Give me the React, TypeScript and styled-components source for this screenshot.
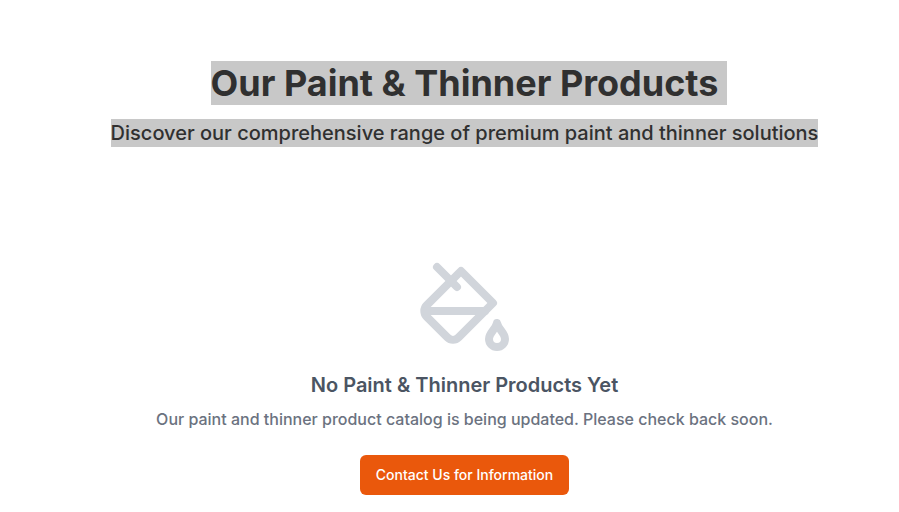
import React from "react";
import styled, { createGlobalStyle } from "styled-components";

const Global = createGlobalStyle`
  * { box-sizing: border-box; }
  body { margin: 0; background: #fff; font-family: Inter, sans-serif; overflow: hidden; }
  h1, h2, p { margin: 0; }
`;
const Page = styled.main`
  width: 929px;
  height: 512px;
  display: flex;
  flex-direction: column;
  align-items: center;
  white-space: nowrap;
`;
const Selected = styled.span`
  display: inline-block;
  background: #c8c8c8;
  color: #303030;
`;
const Title = styled.h1`
  margin-top: 61px;
  padding-left: 9px;
  height: 44px;
  font-size: 36px;
  line-height: 44px;
  font-weight: 700;
  ${Selected} { padding-right: 9px; }
`;
const Subtitle = styled.p`
  margin-top: 14px;
  height: 28px;
  font-size: 20px;
  line-height: 28px;
  font-weight: 450;
`;
const Bucket = styled.svg`
  display: block;
  flex: none;
  margin-top: 112px;
  width: 96px;
  height: 96px;
  fill: none;
  stroke: #d1d5db;
  stroke-width: 2;
  stroke-linecap: round;
  stroke-linejoin: round;
`;
const EmptyTitle = styled.h2`
  margin-top: 16px;
  font-size: 20px;
  line-height: 28px;
  font-weight: 600;
  color: #4b5563;
`;
const EmptyText = styled.p`
  margin-top: 8px;
  font-size: 16px;
  line-height: 24px;
  font-weight: 500;
  color: #6b7280;
`;
const ContactButton = styled.button`
  margin-top: 24px;
  height: 40px;
  width: 209px;
  padding: 0;
  border: 0;
  border-radius: 6px;
  background: #ea580c;
  color: #fff;
  font: 500 14px/20px Inter, sans-serif;
`;

export default function App() {
  return (
    <>
      <Global />
      <Page>
        <Title><Selected>Our Paint &amp; Thinner Products</Selected></Title>
        <Subtitle><Selected>Discover our comprehensive range of premium paint and thinner solutions</Selected></Subtitle>
        <Bucket viewBox="0 0 24 24" aria-hidden="true">
          <path d="m19 11-8-8-8.6 8.6a2 2 0 0 0 0 2.8l5.2 5.2c.8.8 2 .8 2.8 0L19 11Z" />
          <path d="m5 2 5 5" />
          <path d="M2 13h15" />
          <path d="M22 20a2 2 0 1 1-4 0c0-1.6 1.7-2.4 2-4 .3 1.6 2 2.4 2 4Z" />
        </Bucket>
        <EmptyTitle>No Paint &amp; Thinner Products Yet</EmptyTitle>
        <EmptyText>Our paint and thinner product catalog is being updated. Please check back soon.</EmptyText>
        <ContactButton>Contact Us for Information</ContactButton>
      </Page>
    </>
  );
}
